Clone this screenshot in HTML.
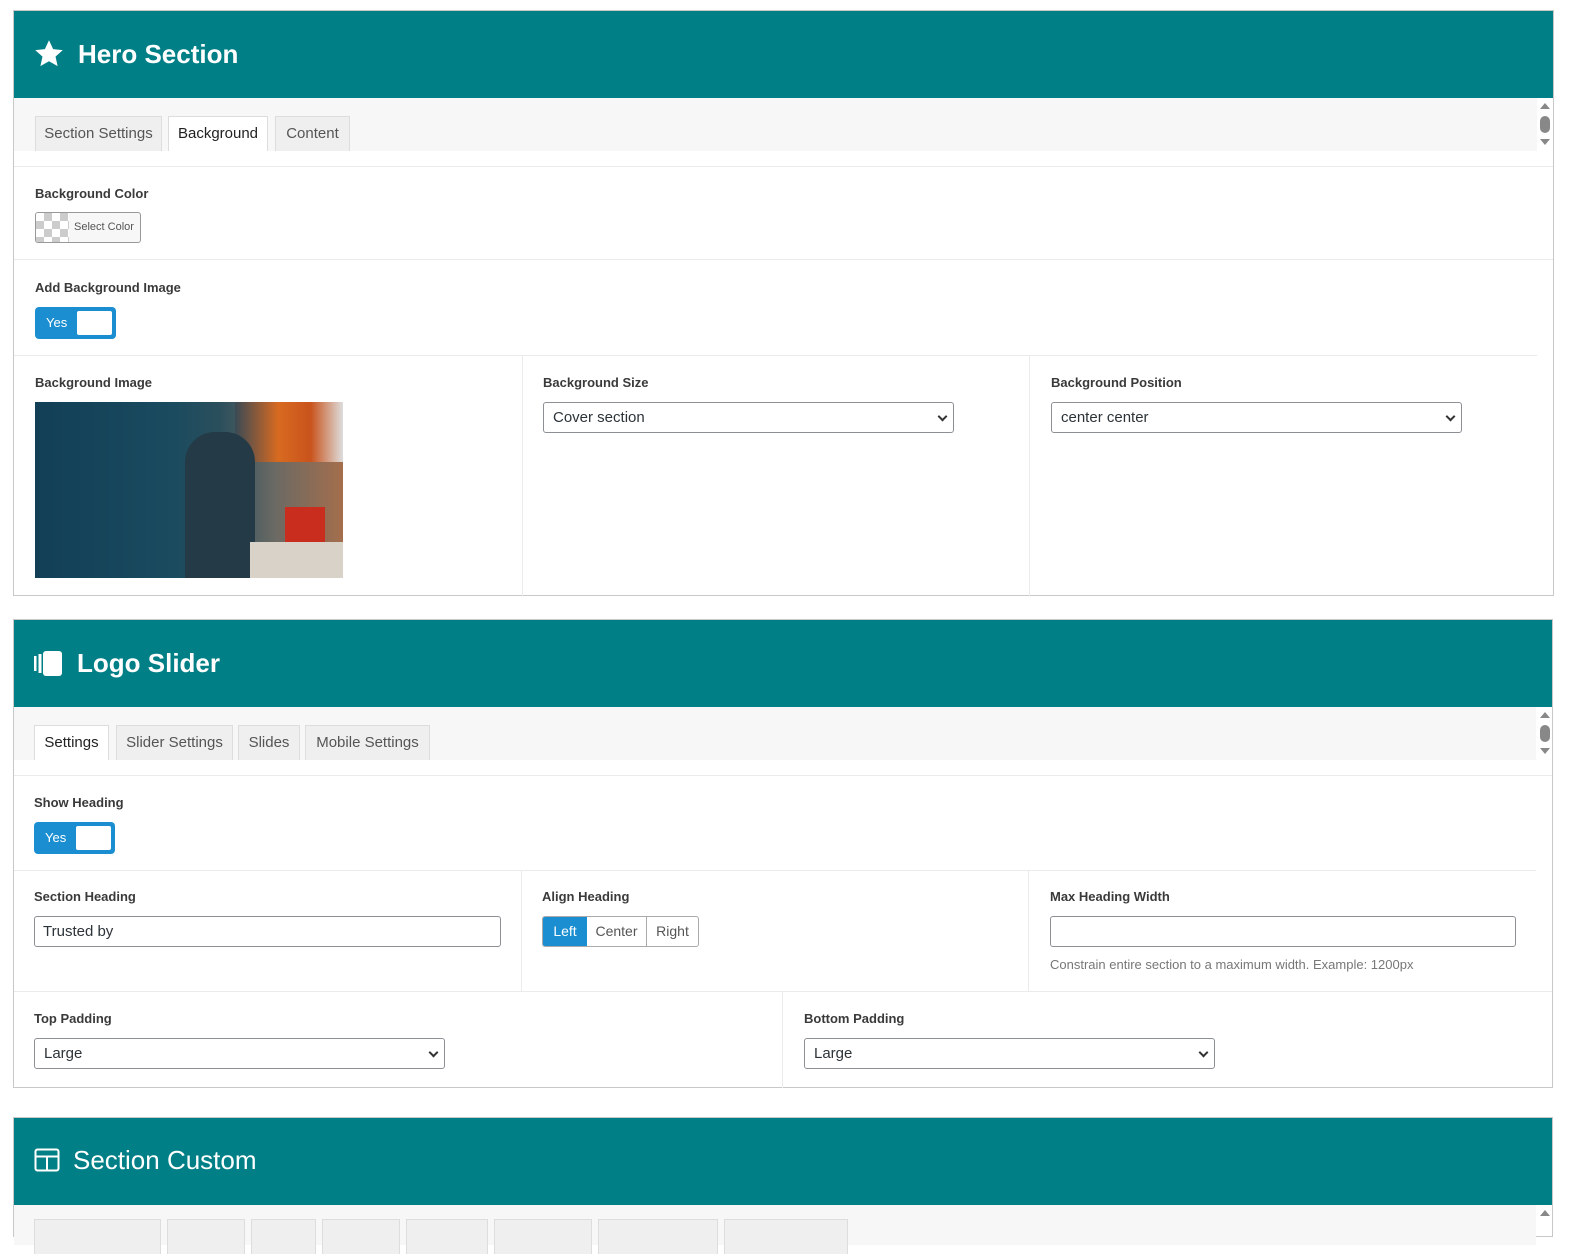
<!DOCTYPE html><html><head><style>
body{margin:0;background:#fff;font-family:"Liberation Sans",sans-serif;color:#333;width:1572px;height:1224px;overflow:hidden;position:relative}
.a{position:absolute}
.panel{position:absolute;border:1px solid #c8c8c8;background:#fff;box-sizing:border-box}
.hd{position:absolute;left:0;right:0;top:0;height:87px;background:#007f86;color:#fff;font-size:26px;font-weight:bold}
.tb{position:absolute;left:0;right:16px;background:#f7f7f7}
.tab{position:absolute;height:35px;box-sizing:border-box;border:1px solid #ddd;border-bottom:none;background:#efefef;color:#555;font-size:15px;line-height:34px;text-align:center}
.tab.on{background:#fff;color:#222}
.hl{position:absolute;height:1px;background:#ebebeb}
.vl{position:absolute;width:1px;background:#ebebeb}
.lb{position:absolute;font-size:13px;font-weight:bold;color:#3a3a3a}
.tg{position:absolute;width:81px;height:32px;background:#1a8ed0;border-radius:4px;box-sizing:border-box}
.tg span{position:absolute;left:11px;top:8px;color:#fff;font-size:13px}
.tg i{position:absolute;right:4px;top:4px;width:35px;height:24px;background:#fff;border-radius:2px}
.sel{position:absolute;height:31px;box-sizing:border-box;border:1px solid #8c8f94;border-radius:3px;font-size:15px;line-height:29px;padding-left:9px;color:#2c3338}
.sel:after{content:"";position:absolute;right:7px;top:10px;width:5px;height:5px;border-right:2px solid #333;border-bottom:2px solid #333;transform:rotate(45deg)}
.inp{position:absolute;height:31px;box-sizing:border-box;border:1px solid #8c8f94;border-radius:3px;font-size:15px;line-height:29px;padding-left:8px;color:#2c3338}
</style></head><body>

<div class="panel" style="left:13px;top:10px;width:1541px;height:586px">
 <div class="hd"><svg class="a" style="left:20px;top:28px" width="30" height="30" viewBox="0 0 24 24"><path fill="#fff" d="M12 1l3.3 7.1 7.7.8-5.8 5.2 1.7 7.6L12 17.8l-6.9 3.9 1.7-7.6L1 8.9l7.7-.8z"/></svg><span class="a" style="left:64px;top:28px">Hero Section</span></div>
 <div class="tb" style="top:87px;height:53px"></div>
 <div class="tab" style="left:21px;top:105px;width:127px">Section Settings</div>
 <div class="tab on" style="left:154px;top:105px;width:100px">Background</div>
 <div class="tab" style="left:261px;top:105px;width:75px">Content</div>
 <div class="a" style="left:1526px;top:92px;width:0;height:0;border:5px solid transparent;border-bottom:6px solid #888;border-top:none"></div>
 <div class="a" style="left:1526px;top:105px;width:10px;height:17px;background:#888;border-radius:5px"></div>
 <div class="a" style="left:1526px;top:128px;width:0;height:0;border:5px solid transparent;border-top:6px solid #888;border-bottom:none"></div>
 <div class="hl" style="left:0;top:155px;width:1539px"></div>
 <div class="lb" style="left:21px;top:175px">Background Color</div>
 <div class="a" style="left:21px;top:201px;width:106px;height:31px;border:1px solid #999;border-radius:3px;background:#f7f7f7;box-sizing:border-box;overflow:hidden">
  <div class="a" style="left:0;top:0;width:33px;height:30px;background:repeating-conic-gradient(#ccc 0 25%,#fff 0 50%) 0 0/16px 16px"></div>
  <span class="a" style="left:38px;top:8px;font-size:11px;color:#555">Select Color</span></div>
 <div class="hl" style="left:0;top:248px;width:1539px"></div>
 <div class="lb" style="left:21px;top:269px">Add Background Image</div>
 <div class="tg" style="left:21px;top:296px"><span>Yes</span><i></i></div>
 <div class="hl" style="left:0;top:344px;width:1523px"></div>
 <div class="vl" style="left:508px;top:345px;height:240px"></div>
 <div class="vl" style="left:1015px;top:345px;height:240px"></div>
 <div class="lb" style="left:21px;top:364px">Background Image</div>
 <div class="a" style="left:21px;top:391px;width:308px;height:176px;background:linear-gradient(90deg,#123f56 0%,#1a4b5f 45%,#2b4f5c 60%,#6b6a64 78%,#a46e4c 100%)">
  <div class="a" style="left:200px;top:0;width:108px;height:60px;background:linear-gradient(90deg,#3a4a55,#d86a20 40%,#c9531c 70%,#ddd)"></div>
  <div class="a" style="left:150px;top:30px;width:70px;height:146px;background:#243a46;border-radius:30px 30px 0 0"></div>
  <div class="a" style="left:250px;top:105px;width:40px;height:35px;background:#c92d1e"></div>
  <div class="a" style="left:215px;top:140px;width:93px;height:36px;background:#d8d2c8"></div>
 </div>
 <div class="lb" style="left:529px;top:364px">Background Size</div>
 <div class="sel" style="left:529px;top:391px;width:411px">Cover section</div>
 <div class="lb" style="left:1037px;top:364px">Background Position</div>
 <div class="sel" style="left:1037px;top:391px;width:411px">center center</div>
</div>

<div class="panel" style="left:13px;top:619px;width:1540px;height:469px">
 <div class="hd"><svg class="a" style="left:19px;top:30px" width="32" height="27" viewBox="0 0 32 27"><rect x="1" y="6" width="2.5" height="15" fill="#fff"/><rect x="5.5" y="4" width="3" height="19" fill="#fff"/><rect x="10" y="1" width="19" height="25" rx="3" fill="#fff"/></svg><span class="a" style="left:63px;top:28px">Logo Slider</span></div>
 <div class="tb" style="top:87px;height:53px"></div>
 <div class="tab on" style="left:20px;top:105px;width:75px">Settings</div>
 <div class="tab" style="left:102px;top:105px;width:117px">Slider Settings</div>
 <div class="tab" style="left:224px;top:105px;width:62px">Slides</div>
 <div class="tab" style="left:291px;top:105px;width:125px">Mobile Settings</div>
 <div class="a" style="left:1526px;top:92px;width:0;height:0;border:5px solid transparent;border-bottom:6px solid #888;border-top:none"></div>
 <div class="a" style="left:1526px;top:105px;width:10px;height:17px;background:#888;border-radius:5px"></div>
 <div class="a" style="left:1526px;top:128px;width:0;height:0;border:5px solid transparent;border-top:6px solid #888;border-bottom:none"></div>
 <div class="hl" style="left:0;top:155px;width:1538px"></div>
 <div class="lb" style="left:20px;top:175px">Show Heading</div>
 <div class="tg" style="left:20px;top:202px"><span>Yes</span><i></i></div>
 <div class="hl" style="left:0;top:250px;width:1522px"></div>
 <div class="vl" style="left:507px;top:251px;height:120px"></div>
 <div class="vl" style="left:1014px;top:251px;height:120px"></div>
 <div class="lb" style="left:20px;top:269px">Section Heading</div>
 <div class="inp" style="left:20px;top:296px;width:467px">Trusted by</div>
 <div class="lb" style="left:528px;top:269px">Align Heading</div>
 <div class="a" style="left:528px;top:296px;width:157px;height:31px;border:1px solid #aaa;border-radius:3px;box-sizing:border-box;font-size:14px;line-height:29px;color:#555;overflow:hidden">
  <div class="a" style="left:0;top:0;width:44px;height:29px;background:#1a8ed0;color:#fff;text-align:center">Left</div>
  <div class="a" style="left:44px;top:0;width:59px;height:29px;border-right:1px solid #aaa;text-align:center">Center</div>
  <div class="a" style="left:104px;top:0;width:51px;text-align:center">Right</div></div>
 <div class="lb" style="left:1036px;top:269px">Max Heading Width</div>
 <div class="inp" style="left:1036px;top:296px;width:466px"></div>
 <div class="a" style="left:1036px;top:337px;font-size:13px;color:#777">Constrain entire section to a maximum width. Example: 1200px</div>
 <div class="hl" style="left:0;top:371px;width:1538px"></div>
 <div class="vl" style="left:768px;top:372px;height:96px"></div>
 <div class="lb" style="left:20px;top:391px">Top Padding</div>
 <div class="sel" style="left:20px;top:418px;width:411px">Large</div>
 <div class="lb" style="left:790px;top:391px">Bottom Padding</div>
 <div class="sel" style="left:790px;top:418px;width:411px">Large</div>
</div>

<div class="panel" style="left:13px;top:1117px;width:1540px;height:120px">
 <div class="hd"><svg class="a" style="left:20px;top:30px" width="26" height="24" viewBox="0 0 26 24"><rect x="1.5" y="1.5" width="23" height="21" rx="2" fill="none" stroke="#fff" stroke-width="2"/><path d="M1.5 8.5h23M13 8.5v14" stroke="#fff" stroke-width="2"/></svg><span class="a" style="left:59px;top:27px;font-weight:normal">Section Custom</span></div>
 <div class="tb" style="top:87px;height:40px"></div>
 <div class="tab" style="left:20px;top:101px;width:127px"></div>
 <div class="tab" style="left:153px;top:101px;width:78px"></div>
 <div class="tab" style="left:237px;top:101px;width:65px"></div>
 <div class="tab" style="left:308px;top:101px;width:78px"></div>
 <div class="tab" style="left:392px;top:101px;width:82px"></div>
 <div class="tab" style="left:480px;top:101px;width:98px"></div>
 <div class="tab" style="left:584px;top:101px;width:120px"></div>
 <div class="tab" style="left:710px;top:101px;width:124px"></div>
 <div class="a" style="left:1526px;top:92px;width:0;height:0;border:5px solid transparent;border-bottom:6px solid #888;border-top:none"></div>
</div>
</body></html>
